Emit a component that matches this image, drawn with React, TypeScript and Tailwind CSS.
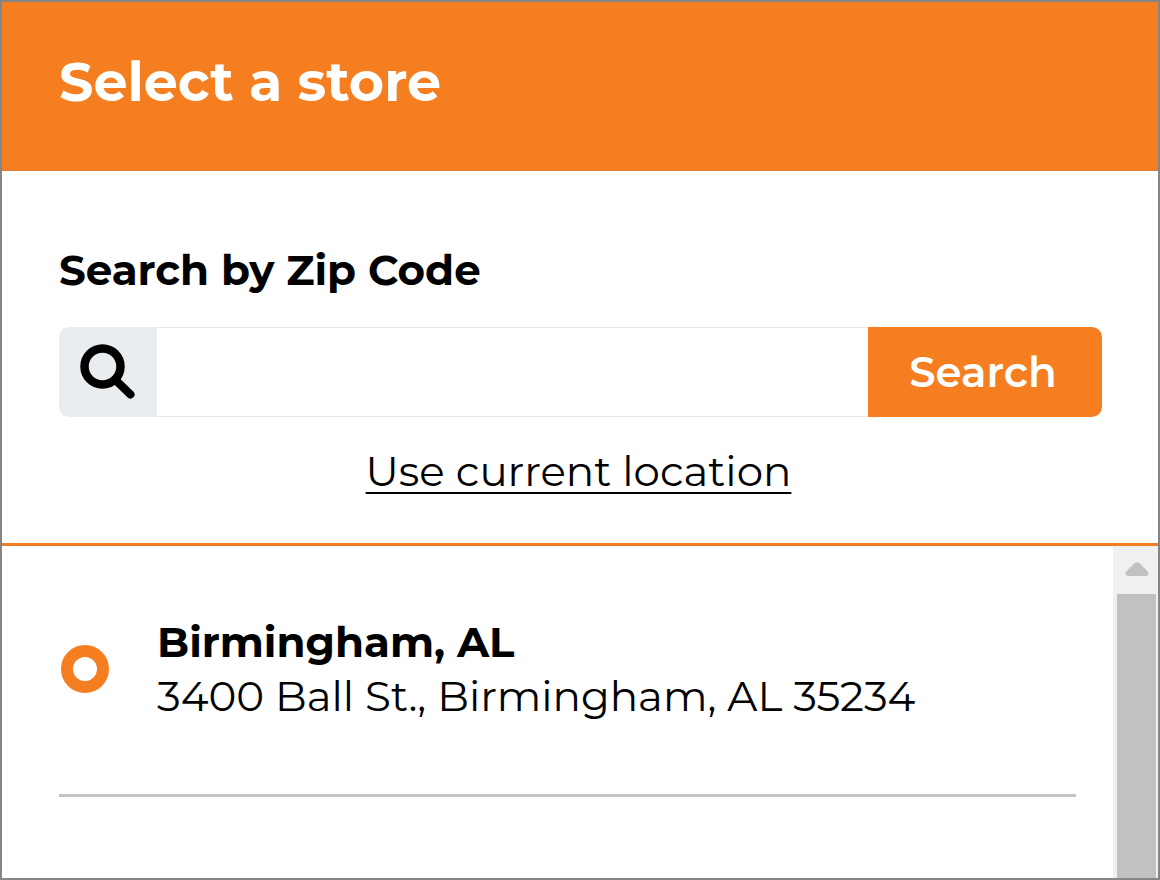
import { useState } from 'react';

interface Store {
  id: string;
  name: string;
  address: string;
}

const stores: Store[] = [
  {
    id: 'birmingham-al',
    name: 'Birmingham, AL',
    address: '3400 Ball St., Birmingham, AL 35234',
  },
];

function SearchIcon() {
  return (
    <svg viewBox="0 0 56 56" className="h-14 w-14" fill="none" stroke="#000" aria-hidden="true">
      <circle cx="22.5" cy="22.5" r="18" strokeWidth="8.5" />
      <path d="M36.5 37 L50.5 50.5" strokeWidth="8" strokeLinecap="round" />
    </svg>
  );
}

function Scrollbar() {
  return (
    <div className="flex w-[45px] shrink-0 flex-col bg-[#f0f0f0] pr-0.5 pl-1">
      <button type="button" aria-label="Scroll up" className="flex h-12 items-center justify-center">
        <svg viewBox="0 0 24 16" className="h-4 w-6" aria-hidden="true">
          <path d="M9.5 1.2 Q12 -0.8 14.5 1.2 L23 9.7 Q24.5 13.8 21 14 H3 Q-0.5 13.8 1 9.7 Z" fill="#c1c1c1" />
        </svg>
      </button>
      <div className="flex-1 bg-[#c1c1c1]" />
    </div>
  );
}

export default function App() {
  const [zip, setZip] = useState('');
  const [selected, setSelected] = useState(stores[0].id);

  return (
    <main className="flex min-h-screen flex-col border-2 border-[#858585] bg-white font-['Montserrat','Inter',sans-serif] text-black">
      <header className="border-b border-[#e07a2c] bg-[#f57e20] px-[57px] pt-12 pb-14">
        <h1 className="text-[54px] leading-[64px] font-bold text-white">Select a store</h1>
      </header>

      <form
        className="border-b-3 border-[#f07c26] pt-[75px] pr-14 pb-12 pl-[57px]"
        onSubmit={(e) => e.preventDefault()}
      >
        <label htmlFor="zip" className="block text-[42px] leading-[48px] font-bold">
          Search by Zip Code
        </label>
        <div className="mt-[33px] flex h-[90px] overflow-hidden rounded-[10px]">
          <div className="flex w-[98px] shrink-0 items-center justify-center bg-[#e9edf0]">
            <SearchIcon />
          </div>
          <input
            id="zip"
            type="text"
            inputMode="numeric"
            value={zip}
            onChange={(e) => setZip(e.target.value)}
            className="min-w-0 flex-1 border-y border-[#e9e9e9] px-6 text-[42px] outline-none"
          />
          <button type="submit" className="w-[234px] shrink-0 bg-[#f57e20] pr-1 text-[42px] leading-[48px] font-semibold text-white">
            Search
          </button>
        </div>
        <div className="mt-[30px] pr-1 text-center">
          <a
            href="#location"
            className="inline-block text-[42px] leading-[48px] underline decoration-2 underline-offset-6"
          >
            Use current location
          </a>
        </div>
      </form>

      <div className="flex flex-1">
        <ul className="flex-1 pr-[37px] pl-[57px]">
          {stores.map((store) => (
            <li key={store.id} className="border-b-3 border-[#c4c4c4] px-0.5 pt-[69px] pb-[71px]">
              <label className="flex items-center gap-12">
                <input
                  type="radio"
                  name="store"
                  checked={selected === store.id}
                  onChange={() => setSelected(store.id)}
                  className="h-12 w-12 shrink-0 appearance-none rounded-full border-12 border-[#f57e20] bg-white"
                />
                <span className="text-[42px] leading-[54px]">
                  <span className="block font-bold">{store.name}</span>
                  <span className="block">{store.address}</span>
                </span>
              </label>
            </li>
          ))}
        </ul>
        <Scrollbar />
      </div>
    </main>
  );
}
